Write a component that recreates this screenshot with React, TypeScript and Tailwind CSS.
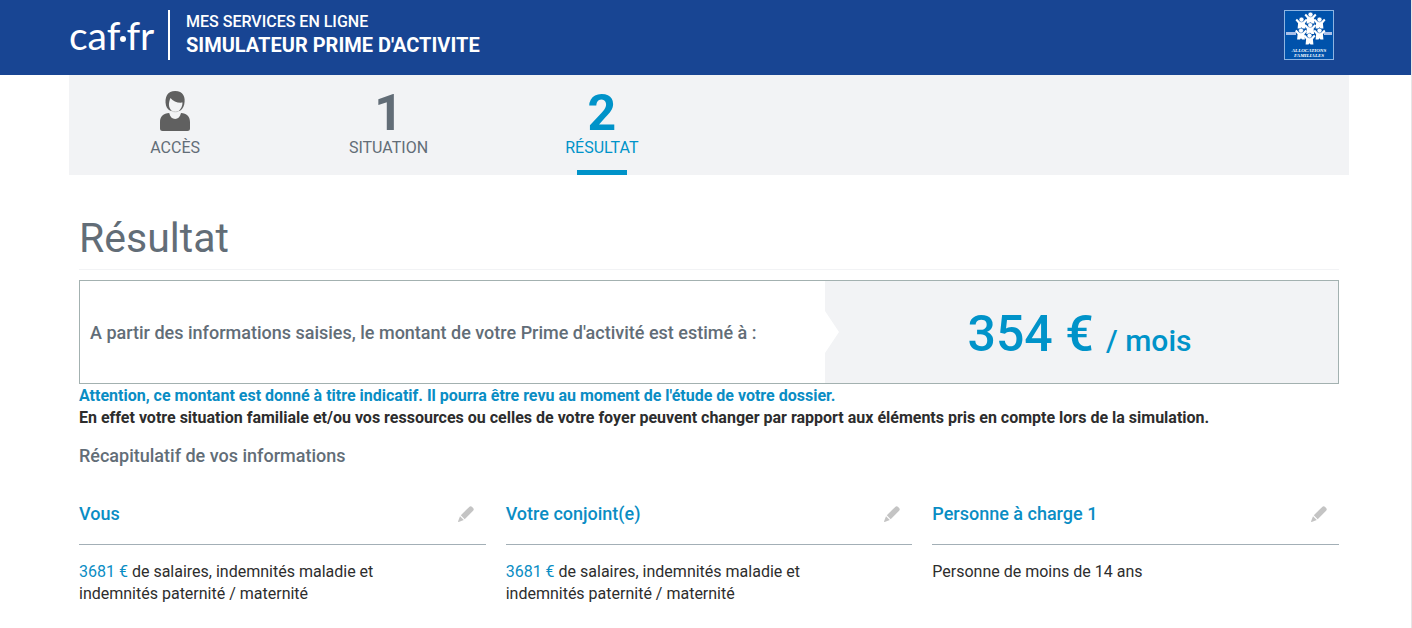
import type { ReactNode } from 'react';

interface Step {
  label: string;
  marker: ReactNode;
  active?: boolean;
}

interface Person {
  title: string;
  amount?: string;
  text: string;
}

const UserIcon = () => (
  <svg className="w-8 h-10" viewBox="0 0 32 40" fill="none" aria-hidden="true">
    <path
      d="M1 37.500V31c0-5.500 3.500-8.600 9.200-9 .8 3.900 3 6 5.900 6s5.100-2.100 5.900-6c5.600.4 9 3.500 9 9v6.500c0 1.700-1 2.500-2.500 2.500h-25C2 40 1 39.200 1 37.500Z"
      fill="#606060"
    />
    <path
      d="M7 14.500C5.200 6 8.600 0 16.200 0 24 0 27 6.300 25.200 13.500c-.9 3.700-3 6-5.600 6.700 2.600-2.200 3.900-5.200 3.900-8.600-4.800.5-9.400-1-12-4.600-2.200 4.900-2.400 9.700 1.600 13.200C9.800 19.400 7.800 17.600 7 14.500Z"
      fill="#606060"
    />
    <path d="M13.100 20.200c2 .8 4.500.8 6.500 0" stroke="#c8c9ca" strokeWidth="1" />
  </svg>
);

const PencilIcon = () => (
  <svg className="w-4 h-4" viewBox="0 0 16 16" fill="#c4c4c4" aria-hidden="true">
    <path d="M11.200.9c.9-.9 2-.9 2.900 0l1 1c.9.900.9 2 0 2.900L6.700 13.200 2.800 9.300Z" />
    <path d="M2 10.200 5.800 14 .7 15.900c-.5.200-.8-.1-.6-.6Z" />
  </svg>
);

const figures = [
  [26.5, 8],
  [17.5, 13],
  [35.5, 13],
  [26.2, 18.5],
  [17, 24],
  [35.5, 24],
  [25.5, 29],
];

const AllocationsLogo = () => (
  <svg className="w-[50px] h-[50px]" viewBox="0 0 50 50" role="img" aria-label="Allocations familiales">
    <rect x=".5" y=".5" width="49" height="49" fill="#0052ab" stroke="#8db4e2" />
    <path d="M2 22h10v3H2ZM40 22h8v3h-8Z" fill="#abc0e8" />
    {figures.map(([x, y]) => (
      <g key={`${x}-${y}`} transform={`translate(${x} ${y})`} fill="#fff">
        <path d="M-6-2.800-4.600-4.300-2-1.700H2L4.600-4.300 6-2.800 3.400.2 3.900 5.500H1L0 4.200l-1 1.300h-2.900L-3.400.2Z" />
        <circle cx="0" cy="-3.400" r="2.400" stroke="#0052ab" strokeWidth=".4" />
      </g>
    ))}
    <text
      x="25"
      y="42"
      textAnchor="middle"
      fill="#fff"
      fontSize="5"
      fontWeight="700"
      fontStyle="italic"
      fontFamily="Liberation Serif, serif"
    >
      ALLOCATIONS
    </text>
    <text
      x="25"
      y="47"
      textAnchor="middle"
      fill="#fff"
      fontSize="5"
      fontWeight="700"
      fontStyle="italic"
      fontFamily="Liberation Serif, serif"
    >
      FAMILIALES
    </text>
  </svg>
);

const steps: Step[] = [
  { label: 'ACCÈS', marker: <UserIcon /> },
  { label: 'SITUATION', marker: '1' },
  { label: 'RÉSULTAT', marker: '2', active: true },
];

const people: Person[] = [
  { title: 'Vous', amount: '3681 €', text: 'de salaires, indemnités maladie et indemnités paternité / maternité' },
  { title: 'Votre conjoint(e)', amount: '3681 €', text: 'de salaires, indemnités maladie et indemnités paternité / maternité' },
  { title: 'Personne à charge 1', text: 'Personne de moins de 14 ans' },
];

const Header = () => (
  <header className="bg-[#184593] text-white">
    <div className="flex items-start justify-between h-[75px] pt-[10px] pl-[69px] pr-[77px]">
      <div className="flex items-center">
        <a
          href="#"
          aria-label="caf.fr"
          className="flex items-center w-[99px] text-[39px] leading-[50px] font-[Lato,sans-serif]"
        >
          <span>caf</span>
          <span className="w-[6px] h-[6px] mt-2 rounded-full bg-white" />
          <span>fr</span>
        </a>
        <div className="h-[50px] pl-4 border-l-2 border-white">
          <p className="text-base leading-6 font-medium">MES SERVICES EN LIGNE</p>
          <p className="text-xl leading-[22px] font-bold">SIMULATEUR PRIME D'ACTIVITE</p>
        </div>
      </div>
      <AllocationsLogo />
    </div>
  </header>
);

const StepNav = () => (
  <nav className="bg-[#f2f3f5]">
    <ol className="grid grid-cols-6 h-[100px]">
      {steps.map((step) => (
        <li key={step.label}>
          <a
            href="#"
            aria-current={step.active ? 'step' : undefined}
            className={`flex flex-col items-center h-full pt-4 pr-px ${step.active ? 'text-[#0093c9]' : 'text-[#626d77]'}`}
          >
            <span className="h-[44px] text-[50px] leading-[44px] font-bold">{step.marker}</span>
            <span className="text-base leading-[26px]">{step.label}</span>
            {step.active && <span className="w-[50px] h-[5px] mt-auto bg-[#0093c9]" />}
          </a>
        </li>
      ))}
    </ol>
  </nav>
);

const AmountBox = () => (
  <section className="flex h-[104px] border border-[#a3b1b0]">
    <p className="flex items-center w-[745px] pt-[2px] pl-[10px] text-lg font-medium text-[#626d77]">
      A partir des informations saisies, le montant de votre Prime d'activité est estimé à :
    </p>
    <div className="flex flex-1 items-center bg-[#f2f3f5]">
      <svg className="w-[14px] h-[42px]" viewBox="0 0 14 42" fill="#fff" aria-hidden="true">
        <path d="M0 0 14 21 0 42Z" />
      </svg>
      <p className="flex-1 pt-1 pr-[18px] text-center text-[50px] leading-[60px] font-medium text-[#0093c9]">
        354 € <span className="text-3xl">/ mois</span>
      </p>
    </div>
  </section>
);

const PersonCard = ({ title, amount, text }: Person) => (
  <section>
    <div className="flex items-center justify-between h-[62px] pr-3 border-b border-[#a3afb6]">
      <h3 className="text-lg font-medium text-[#0a8dc4]">{title}</h3>
      <button type="button" aria-label={`Modifier : ${title}`}>
        <PencilIcon />
      </button>
    </div>
    <p className="mt-4 pr-20 leading-[22px] text-[#2d2d2d]">
      {amount && <span className="text-[#0a8dc4]">{amount}</span>} {text}
    </p>
  </section>
);

export default function App() {
  return (
    <div className="min-h-screen bg-white border-r border-[#e6e6e6] text-base font-[Roboto,sans-serif]">
      <Header />
      <div className="pl-[69px] pr-[62px]">
        <StepNav />
        <main className="px-[10px] pb-6">
          <h1 className="pt-[34px] pb-[2px] mb-[10px] border-b border-[#f2f3f5] text-[41px] leading-[58px] text-[#626d77]">
            Résultat
          </h1>
          <AmountBox />
          <div className="pt-px leading-[22px] font-bold">
            <p className="text-[#0a8dc4]">
              Attention, ce montant est donné à titre indicatif. Il pourra être revu au moment de l'étude de votre
              dossier.
            </p>
            <p className="text-[#2d2d2d]">
              En effet votre situation familiale et/ou vos ressources ou celles de votre foyer peuvent changer par
              rapport aux éléments pris en compte lors de la simulation.
            </p>
          </div>
          <h2 className="mt-4 text-lg leading-[22px] font-medium text-[#626d77]">Récapitulatif de vos informations</h2>
          <div className="grid grid-cols-3 gap-5 mt-4">
            {people.map((person) => (
              <PersonCard key={person.title} {...person} />
            ))}
          </div>
        </main>
      </div>
    </div>
  );
}
